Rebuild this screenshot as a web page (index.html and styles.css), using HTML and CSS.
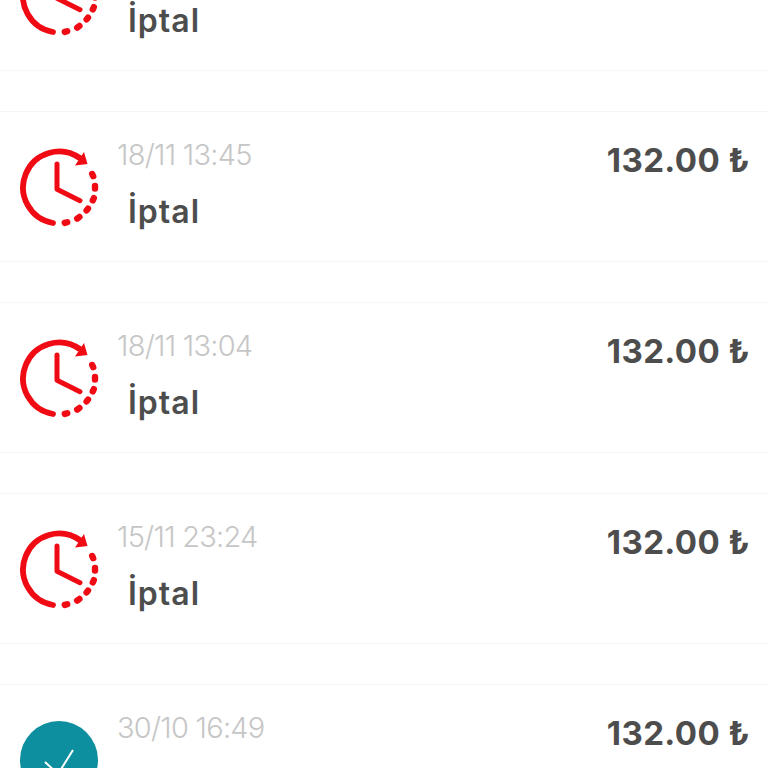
FILE: index.html
```html
<!DOCTYPE html>
<html lang="tr">
<head>
  <meta charset="UTF-8">
  <title>Siparişler</title>
  <link rel="stylesheet" href="styles.css">
</head>
<body>
  <svg class="defs" width="0" height="0">
    <symbol id="clock" viewBox="0 0 80 80">
      <g fill="none" stroke="#f00a14" stroke-linecap="round">
        <path d="M33 75A36 36 0 1 1 59.7 10" stroke-width="5.8"/>
        <path d="M37 16V41.3L60 52.7" stroke-width="5" stroke-linejoin="round"/>
        <path d="M72.2 26L73.2 28.2M75 38V40.6M73.8 50.2L72.8 52.4M68 60.6L66.6 62.4M59.4 69L57.2 70.6M47.2 74.2L44.8 74.9" stroke-width="6.4"/>
      </g>
      <path d="M67.5 16L64 4L55 17.5Z" fill="#f00a14"/>
    </symbol>
  </svg>

  <main class="list">
    <div class="row">
      <svg class="icon"><use href="#clock"/></svg>
      <div class="info">
        <div class="date">18/11 14:02</div>
        <div class="status">İptal</div>
      </div>
      <div class="price">132.00 ₺</div>
    </div>
    <div class="row">
      <svg class="icon"><use href="#clock"/></svg>
      <div class="info">
        <div class="date">18/11 13:45</div>
        <div class="status">İptal</div>
      </div>
      <div class="price">132.00 ₺</div>
    </div>
    <div class="row">
      <svg class="icon"><use href="#clock"/></svg>
      <div class="info">
        <div class="date">18/11 13:04</div>
        <div class="status">İptal</div>
      </div>
      <div class="price">132.00 ₺</div>
    </div>
    <div class="row">
      <svg class="icon"><use href="#clock"/></svg>
      <div class="info">
        <div class="date">15/11 23:24</div>
        <div class="status">İptal</div>
      </div>
      <div class="price">132.00 ₺</div>
    </div>
    <div class="row">
      <svg class="icon" viewBox="0 0 80 80">
        <circle cx="39" cy="39" r="39" fill="#0e8f9f"/>
        <path d="M25 41L38 53L53 29" fill="none" stroke="#fff" stroke-width="2"/>
      </svg>
      <div class="info">
        <div class="date">30/10 16:49</div>
      </div>
      <div class="price">132.00 ₺</div>
    </div>
  </main>
</body>
</html>
```
FILE: styles.css
```css
html, body {
  height: 768px;
  overflow: hidden;
}
body {
  margin: 0;
  background: #fff;
  font-family: "Inter", "DejaVu Sans", sans-serif;
}
.defs {
  display: block;
}
.list {
  margin-top: -80px;
  display: flex;
  flex-direction: column;
  gap: 40px;
}
.row {
  display: flex;
  height: 151px;
  box-sizing: border-box;
  padding: 23px 18px 0 20px;
  border-top: 1px solid #f6f6f6;
  border-bottom: 1px solid #f6f6f6;
}
.icon {
  width: 80px;
  height: 80px;
  margin-top: 13px;
  flex: none;
}
.info {
  margin-left: 17px;
  flex: 1;
}
.date {
  font-size: 29px;
  font-weight: 300;
  line-height: 40px;
  letter-spacing: -0.75px;
  color: #c6c6c6;
}
.status {
  margin: 17px 0 0 11px;
  font-size: 32px;
  font-weight: 600;
  line-height: 40px;
  letter-spacing: 1px;
  color: #4d4d4d;
}
.price {
  margin-top: 3px;
  font-size: 33px;
  font-weight: 700;
  line-height: 44px;
  letter-spacing: 0.4px;
  color: #4d4d4d;
}
```
